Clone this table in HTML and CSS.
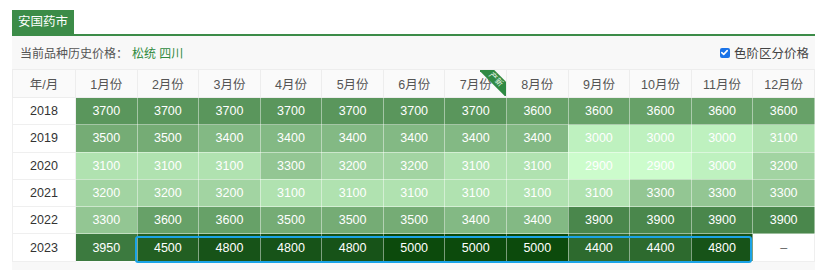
FILE: index.html
```html
<!DOCTYPE html>
<html lang="zh">
<head>
<meta charset="utf-8">
<link rel="stylesheet" href="styles.css">
</head>
<body>
<div class="wrap">
  <div class="tabs"><div class="tab">安国药市</div></div>
  <div class="panel">
    <div class="info">
      <div class="title">当前品种历史价格：<span class="name">松统 四川</span></div>
      <label class="toggle"><span class="check"><svg width="9" height="9" viewBox="0 0 9 9"><path d="M1.8 4.6 L3.7 6.4 L7.2 2.6" fill="none" stroke="#fff" stroke-width="1.6" stroke-linecap="round" stroke-linejoin="round"/></svg></span>色阶区分价格</label>
    </div>
    <div class="tablewrap">
      <table class="grid">
        <colgroup><col class="c-year"></colgroup>
        <thead>
          <tr><th>年/月</th><th>1月份</th><th>2月份</th><th>3月份</th><th>4月份</th><th>5月份</th><th>6月份</th><th class="hot">7月份<div class="ribbon"><span>产新</span></div></th><th>8月份</th><th>9月份</th><th>10月份</th><th>11月份</th><th>12月份</th></tr>
        </thead>
        <tbody>
          <tr><td class="yr">2018</td><td class="p3700">3700</td><td class="p3700">3700</td><td class="p3700">3700</td><td class="p3700">3700</td><td class="p3700">3700</td><td class="p3700">3700</td><td class="p3700">3700</td><td class="p3600">3600</td><td class="p3600">3600</td><td class="p3600">3600</td><td class="p3600">3600</td><td class="p3600">3600</td></tr>
          <tr><td class="yr">2019</td><td class="p3500">3500</td><td class="p3500">3500</td><td class="p3400">3400</td><td class="p3400">3400</td><td class="p3400">3400</td><td class="p3400">3400</td><td class="p3400">3400</td><td class="p3400">3400</td><td class="p3000">3000</td><td class="p3000">3000</td><td class="p3000">3000</td><td class="p3100">3100</td></tr>
          <tr><td class="yr">2020</td><td class="p3100">3100</td><td class="p3100">3100</td><td class="p3100">3100</td><td class="p3300">3300</td><td class="p3200">3200</td><td class="p3200">3200</td><td class="p3100">3100</td><td class="p3100">3100</td><td class="p2900">2900</td><td class="p2900">2900</td><td class="p3000">3000</td><td class="p3200">3200</td></tr>
          <tr><td class="yr">2021</td><td class="p3200">3200</td><td class="p3200">3200</td><td class="p3200">3200</td><td class="p3100">3100</td><td class="p3100">3100</td><td class="p3100">3100</td><td class="p3100">3100</td><td class="p3100">3100</td><td class="p3100">3100</td><td class="p3300">3300</td><td class="p3300">3300</td><td class="p3300">3300</td></tr>
          <tr><td class="yr">2022</td><td class="p3300">3300</td><td class="p3600">3600</td><td class="p3600">3600</td><td class="p3500">3500</td><td class="p3500">3500</td><td class="p3500">3500</td><td class="p3400">3400</td><td class="p3400">3400</td><td class="p3900">3900</td><td class="p3900">3900</td><td class="p3900">3900</td><td class="p3900">3900</td></tr>
          <tr><td class="yr">2023</td><td class="p3950">3950</td><td class="p4500">4500</td><td class="p4800">4800</td><td class="p4800">4800</td><td class="p4800">4800</td><td class="p5000">5000</td><td class="p5000">5000</td><td class="p5000">5000</td><td class="p4400">4400</td><td class="p4400">4400</td><td class="p4800">4800</td><td class="empty">–</td></tr>
        </tbody>
      </table>
      <div class="highlight"></div>
    </div>
  </div>
</div>
</body>
</html>
```

FILE: styles.css
```css
* { box-sizing: border-box; }
body {
  margin: 0;
  background: #fff;
  font-family: "Liberation Sans", "Noto Sans CJK SC", sans-serif;
  color: #333;
}
.wrap {
  padding: 10px 14px 0 12px;
}
.tabs {
  display: flex;
  border-bottom: 2px solid #3c8c48;
}
.tab {
  background: #3c8c48;
  color: #fff;
  font-size: 12.5px;
  height: 24px;
  line-height: 24px;
  padding: 0 6px;
  white-space: nowrap;
}
.panel {
  background: #f8f8f8;
  padding-bottom: 8px;
}
.info {
  display: flex;
  justify-content: space-between;
  align-items: center;
  height: 33px;
  padding: 0 6px 0 8px;
  font-size: 12px;
  color: #555;
}
.name {
  color: #2f8a3e;
  margin-left: 4px;
}
.toggle {
  display: flex;
  align-items: center;
  gap: 4px;
  font-size: 12.5px;
  color: #444;
}
.check {
  width: 10px;
  height: 10px;
  border-radius: 2px;
  background: #1a73e8;
  display: flex;
  align-items: center;
  justify-content: center;
}
.tablewrap {
  position: relative;
}
.grid {
  width: 803px;
  table-layout: fixed;
  border-collapse: collapse;
  font-size: 12.5px;
}
.c-year { width: 63px; }
.grid th {
  background: #fafafa;
  color: #555;
  font-weight: normal;
  height: 28px;
  border: 1px solid #ededed;
  text-align: center;
  padding: 0;
}
.grid th.hot {
  position: relative;
  overflow: hidden;
}
.ribbon {
  position: absolute;
  top: 0;
  right: 0;
  width: 26px;
  height: 26px;
  overflow: hidden;
}
.ribbon span {
  position: absolute;
  top: 4px;
  right: -12px;
  width: 44px;
  height: 11px;
  line-height: 11px;
  background: #2f8a44;
  color: #e8f5e8;
  font-size: 8px;
  text-align: center;
  transform: rotate(45deg);
}
.grid td {
  height: 27.3px;
  text-align: center;
  padding: 0;
  color: #fff;
  border: 1px solid rgba(255,255,255,0.45);
}
.grid td.yr {
  background: #fff;
  color: #333;
  border: 1px solid #efefef;
}
.grid td.empty {
  background: #fff;
  color: #666;
  border: 1px solid #efefef;
}
.p2900 { background: #ccfccc; }
.p3000 { background: #bef1bf; }
.p3100 { background: #b0e2b0; }
.p3200 { background: #a2d4a2; }
.p3300 { background: #93c693; }
.p3400 { background: #83b984; }
.p3500 { background: #75ac75; }
.p3600 { background: #67a168; }
.p3700 { background: #5a965c; }
.p3900 { background: #4a874c; }
.p3950 { background: #3c7a3f; }
.p4400 { background: #2d6a2e; }
.p4500 { background: #225f22; }
.p4800 { background: #175318; }
.p5000 { background: #0c4a0c; }
.highlight {
  position: absolute;
  left: 123px;
  top: 167px;
  width: 617px;
  height: 27px;
  border: 2px solid #1aa3e6;
  border-radius: 3px;
  pointer-events: none;
}
```
